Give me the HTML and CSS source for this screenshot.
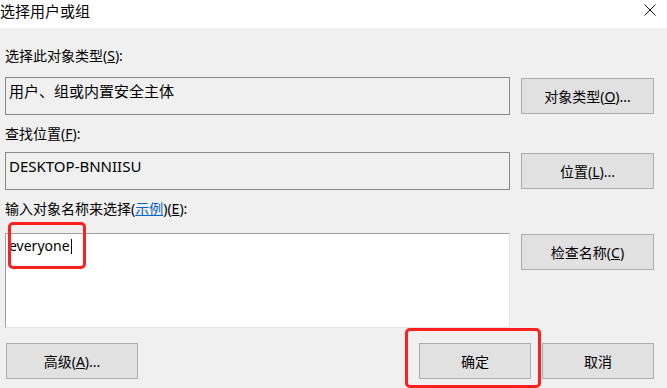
FILE: index.html
```html
<!DOCTYPE html>
<html lang="zh-CN">
<head>
  <meta charset="UTF-8">
  <title>选择用户或组</title>
  <link rel="stylesheet" href="styles.css">
</head>
<body>
  <div class="dialog">
    <!-- Title bar -->
    <div class="titlebar">
      <span class="title">选择用户或组</span>
      <svg class="close" width="12" height="12" viewBox="0 0 12 12">
        <path d="M0.5 0.5 L11.5 11.5 M11.5 0.5 L0.5 11.5" stroke="#111" stroke-width="1" fill="none"/>
      </svg>
    </div>

    <div class="content">
      <div class="label first">选择此对象类型(<u>S</u>):</div>
      <div class="row">
        <div class="field">用户、组或内置安全主体</div>
        <button class="btn side">对象类型(<u>O</u>)...</button>
      </div>

      <div class="label">查找位置(<u>F</u>):</div>
      <div class="row">
        <div class="field">DESKTOP-BNNIISU</div>
        <button class="btn side">位置(<u>L</u>)...</button>
      </div>

      <div class="label third">输入对象名称来选择(<a class="link" href="#">示例</a>)(<u>E</u>):</div>
      <div class="row">
        <div class="field editor">everyone<span class="caret"></span></div>
        <button class="btn side">检查名称(<u>C</u>)</button>
      </div>

      <div class="footer">
        <button class="btn wide">高级(<u>A</u>)...</button>
        <div class="actions">
          <button class="btn small">确定</button>
          <button class="btn small">取消</button>
        </div>
      </div>
    </div>

    <!-- red annotation marks -->
    <div class="mark mark-name"></div>
    <div class="mark mark-ok"></div>
  </div>
</body>
</html>
```

FILE: styles.css
```css
body {
  margin: 0;
  padding: 0;
  width: 667px;
  height: 388px;
  overflow: hidden;
  background: #f0f0f0;
  font-family: "Noto Sans", "Noto Sans CJK SC", sans-serif;
  font-size: 14px;
  color: #000;
}

.dialog {
  position: relative;
  width: 667px;
  height: 388px;
}

.titlebar {
  height: 28px;
  background: #fff;
  display: flex;
  justify-content: space-between;
  align-items: flex-start;
}

.title {
  font-size: 15px;
  line-height: 22px;
  margin-left: 0;
}

.close {
  margin-top: 4px;
  margin-right: 11px;
}

.content {
  padding-left: 5px;
}

.label {
  height: 20px;
  line-height: 20px;
  margin-top: 9px;
  margin-bottom: 8px;
}

.label.first {
  margin-top: 18px;
  margin-bottom: 11px;
}

.label.third {
  margin-bottom: 14px;
}

.link {
  color: #0066cc;
  text-decoration: underline;
}

.row {
  display: flex;
  align-items: flex-start;
  gap: 11px;
}

.field {
  box-sizing: border-box;
  width: 505px;
  height: 38px;
  border: 1px solid #8a8a8a;
  padding: 3px 3px 0;
  line-height: 20px;
  font-size: 15px;
  white-space: nowrap;
}

.editor {
  height: 95px;
  background: #fff;
  border-color: #a0a0a0 #e3e3e3 #e3e3e3 #a0a0a0;
  padding-top: 2px;
  font-size: 14px;
}

.caret {
  display: inline-block;
  width: 1px;
  height: 15px;
  background: #000;
  vertical-align: -3px;
  margin-left: 1px;
}

.btn {
  box-sizing: border-box;
  height: 36px;
  margin: 1px 0 0;
  padding: 0;
  background: #e1e1e1;
  border: 1px solid #adadad;
  font-family: inherit;
  font-size: 14px;
  color: #000;
}

.btn.side {
  width: 133px;
}

.btn.wide {
  width: 132px;
  margin-left: 1px;
}

.btn.small {
  width: 112px;
}

.footer {
  display: flex;
  justify-content: space-between;
  margin-top: 14px;
  width: 649px;
}

.actions {
  display: flex;
  gap: 11px;
}

.mark {
  position: absolute;
  box-sizing: border-box;
  border: 3px solid #ff1f1f;
  border-radius: 5px;
}

.mark-name {
  left: 8px;
  top: 222px;
  width: 78px;
  height: 47px;
}

.mark-ok {
  left: 405px;
  top: 328px;
  width: 136px;
  height: 60px;
}
```
